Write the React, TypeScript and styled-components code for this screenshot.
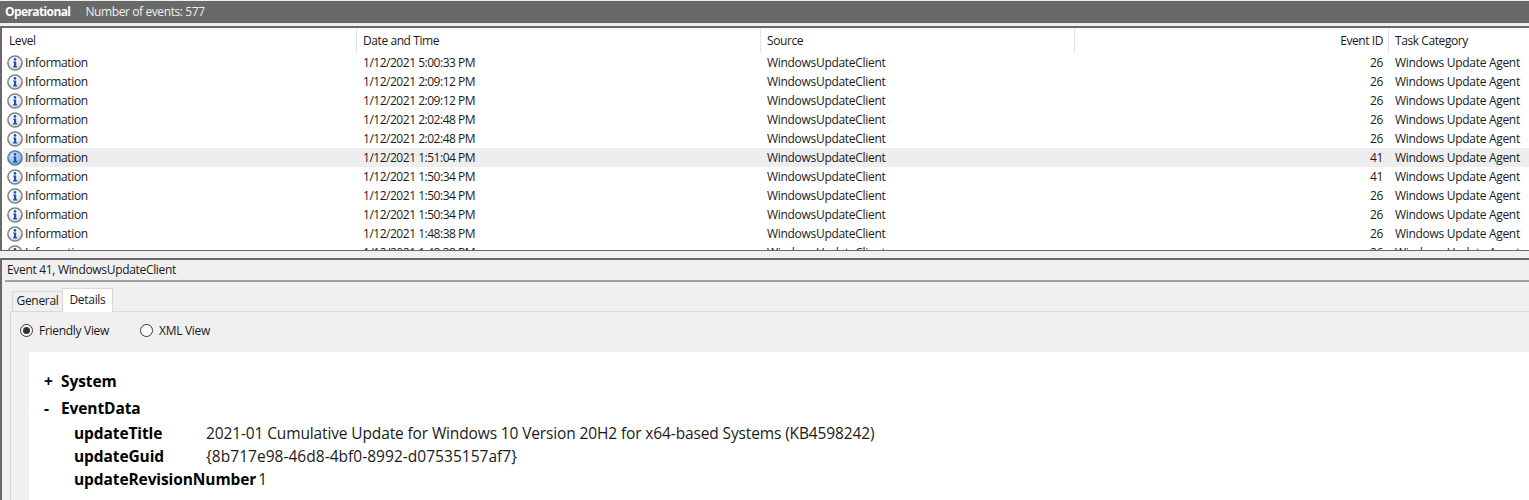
import React from "react";
import styled, { createGlobalStyle } from "styled-components";

const Global = createGlobalStyle`
  html, body { margin: 0; padding: 0; background: #f0f0f0; }
  body { font-family: "Open Sans", "Noto Sans", "Liberation Sans", sans-serif; font-size: 12px; color: #000; overflow: hidden; }
`;

const Page = styled.div`
  width: 1529px;
  height: 500px;
  overflow: hidden;
  display: flex;
  flex-direction: column;
  background: #f0f0f0;
`;

const TitleBar = styled.header`
  box-sizing: border-box;
  height: 22px;
  margin-top: 1px;
  padding: 0 0 2px 5px;
  background: #696969;
  color: #fff;
  display: flex;
  align-items: center;
  gap: 15px;
  flex: none;
`;
const TitleStrong = styled.span`
  font-weight: 700;
  font-size: 12px;
  letter-spacing: -0.6px;
`;
const TitleInfo = styled.span`
  font-size: 12px;
  color: #f0f0f0;
  letter-spacing: -0.4px;
`;

const ListPane = styled.section`
  margin-top: 3px;
  flex: none;
  overflow: hidden;
  background: #fff;
  border-top: 2px solid #696969;
  border-left: 2px solid #696969;
  border-bottom: 1px solid #696969;
  padding-left: 1px;
  box-sizing: border-box;
  height: 225px;
`;

const COLS = "354px 404px 314px 314px 1fr";

const HeaderRow = styled.div`
  display: grid;
  grid-template-columns: ${COLS};
  height: 25px;
`;
const HeadCell = styled.div<{ $right?: boolean; $sep?: boolean }>`
  display: flex;
  align-items: center;
  justify-content: ${(p) => (p.$right ? "flex-end" : "flex-start")};
  padding: 0 5px 0 6px;
  border-right: ${(p) => (p.$sep ? "1px solid #e5e5e5" : "none")};
  letter-spacing: -0.42px;
  color: #1a1a1a;
`;

const Row = styled.div<{ $selected?: boolean }>`
  display: grid;
  grid-template-columns: ${COLS};
  height: 19px;
  align-items: center;
  background: ${(p) => (p.$selected ? "linear-gradient(to right, #fff 20px, #eeeeee 20px)" : "#fff")};
`;
const LevelCell = styled.div`
  display: flex;
  align-items: center;
  gap: 2px;
  padding-left: 4px;
  letter-spacing: -0.33px;
  color: #1a1a1a;
`;
const Cell = styled.div<{ $right?: boolean; $tight?: boolean }>`
  padding: 0 ${(p) => (p.$right ? "6px" : "0")} 0 6px;
  text-align: ${(p) => (p.$right ? "right" : "left")};
  letter-spacing: ${(p) => (p.$tight ? "-0.48px" : "-0.3px")};
  color: #1a1a1a;
`;

const Splitter = styled.div`
  height: 7px;
  flex: none;
  background: #f0f0f0;
`;

const DetailPane = styled.section`
  flex: 1;
  display: flex;
  flex-direction: column;
  border-top: 2px solid #696969;
  border-left: 2px solid #696969;
  padding-left: 3px;
  min-height: 0;
`;
const DetailTitle = styled.div`
  box-sizing: border-box;
  height: 20px;
  flex: none;
  display: flex;
  align-items: center;
  padding: 0 0 2px 2px;
  letter-spacing: -0.32px;
  color: #1a1a1a;
`;
const TitleRule = styled.div`
  height: 2px;
  background: #a0a0a0;
  flex: none;
`;
const TabStrip = styled.div`
  display: flex;
  align-items: flex-end;
  height: 29px;
  padding-left: 7px;
  flex: none;
`;
const Tab = styled.div<{ $active?: boolean }>`
  box-sizing: border-box;
  height: ${(p) => (p.$active ? "24px" : "20px")};
  width: ${(p) => (p.$active ? "51px" : "50px")};
  padding-bottom: 2px;
  background: ${(p) => (p.$active ? "#fff" : "#f0f0f0")};
  border: 1px solid #d9d9d9;
  border-bottom: none;
  border-right: ${(p) => (p.$active ? "1px solid #d9d9d9" : "none")};
  display: flex;
  align-items: center;
  justify-content: center;
  letter-spacing: -0.3px;
  margin-bottom: ${(p) => (p.$active ? "-1px" : "0")};
  position: relative;
  z-index: 1;
  color: #1a1a1a;
`;
const TabBody = styled.div`
  flex: 1;
  margin-left: 5px;
  border-top: 1px solid #d9d9d9;
  border-left: 1px solid #d9d9d9;
  display: flex;
  flex-direction: column;
  min-height: 0;
`;
const RadioRow = styled.div`
  box-sizing: border-box;
  height: 40px;
  display: flex;
  align-items: center;
  padding: 0 0 4px 9px;
  gap: 31px;
  flex: none;
`;
const RadioLabel = styled.label`
  display: flex;
  align-items: center;
  gap: 6px;
  letter-spacing: -0.3px;
  color: #1a1a1a;
`;
const RadioDot = styled.span<{ $on?: boolean }>`
  box-sizing: border-box;
  width: 13px;
  height: 13px;
  border-radius: 50%;
  border: 1px solid #333;
  background: #fff;
  display: flex;
  align-items: center;
  justify-content: center;
  &::after {
    content: "";
    display: ${(p) => (p.$on ? "block" : "none")};
    width: 7px;
    height: 7px;
    border-radius: 50%;
    background: #333;
  }
`;
const XmlPanel = styled.div`
  flex: 1;
  margin-left: 18px;
  background: #fff;
  padding: 19px 0 0 15px;
  font-size: 15.5px;
`;
const TreeHead = styled.div<{ $gap?: number }>`
  display: flex;
  align-items: center;
  height: 20px;
  margin-bottom: ${(p) => p.$gap ?? 0}px;
  font-weight: 700;
  letter-spacing: -0.1px;
`;
const Toggle = styled.span`
  width: 17px;
`;
const DataRow = styled.div`
  display: flex;
  align-items: center;
  height: 23px;
  padding-left: 30px;
`;
const DataKey = styled.span<{ $wide?: boolean }>`
  font-weight: 700;
  letter-spacing: -0.1px;
  width: ${(p) => (p.$wide ? "auto" : "132px")};
  margin-right: ${(p) => (p.$wide ? "2px" : "0")};
`;
const DataValue = styled.span<{ $mono?: boolean }>`
  font-weight: 400;
  letter-spacing: ${(p) => (p.$mono ? "0.03px" : "-0.13px")};
  color: #1a1a1a;
`;

const InfoIcon: React.FC<{ id: string; $blue?: boolean }> = ({ id, $blue }) => (
  <svg width="16" height="16" viewBox="0 0 16 16" style={{ flex: "none" }}>
    <defs>
      <radialGradient id={id} cx="0.4" cy="0.3" r="0.8">
        <stop offset="0" stopColor={$blue ? "#d5e8f8" : "#ffffff"} />
        <stop offset="0.6" stopColor={$blue ? "#8fbce6" : "#e8ebf2"} />
        <stop offset="1" stopColor={$blue ? "#4a8ccb" : "#bcc4d6"} />
      </radialGradient>
    </defs>
    <circle cx="8" cy="8" r="7.1" fill={`url(#${id})`} stroke={$blue ? "#5a7ea3" : "#808088"} strokeWidth="1.5" />
    <circle cx="8" cy="4.4" r="1.35" fill="#2450a8" />
    <path d="M6.2 6.5H9.2V11.2H10.2V12.4H6V11.2H7V7.7H6.2Z" fill="#2450a8" />
  </svg>
);

const rows = [
  ["1/12/2021 5:00:33 PM", "26"],
  ["1/12/2021 2:09:12 PM", "26"],
  ["1/12/2021 2:09:12 PM", "26"],
  ["1/12/2021 2:02:48 PM", "26"],
  ["1/12/2021 2:02:48 PM", "26"],
  ["1/12/2021 1:51:04 PM", "41"],
  ["1/12/2021 1:50:34 PM", "41"],
  ["1/12/2021 1:50:34 PM", "26"],
  ["1/12/2021 1:50:34 PM", "26"],
  ["1/12/2021 1:48:38 PM", "26"],
  ["1/12/2021 1:48:38 PM", "26"],
];

export default function App() {
  return (
    <Page>
      <Global />
      <TitleBar>
        <TitleStrong>Operational</TitleStrong>
        <TitleInfo>Number of events: 577</TitleInfo>
      </TitleBar>
      <ListPane>
        <HeaderRow>
          <HeadCell $sep>Level</HeadCell>
          <HeadCell $sep>Date and Time</HeadCell>
          <HeadCell $sep>Source</HeadCell>
          <HeadCell $sep $right>Event ID</HeadCell>
          <HeadCell>Task Category</HeadCell>
        </HeaderRow>
        {rows.map(([date, id], i) => (
          <Row key={i} $selected={i === 5}>
            <LevelCell>
              <InfoIcon id={`info-${i}`} $blue={i === 5} />
              Information
            </LevelCell>
            <Cell $tight>{date}</Cell>
            <Cell>WindowsUpdateClient</Cell>
            <Cell $right>{id}</Cell>
            <Cell>Windows Update Agent</Cell>
          </Row>
        ))}
      </ListPane>
      <Splitter />
      <DetailPane>
        <DetailTitle>Event 41, WindowsUpdateClient</DetailTitle>
        <TitleRule />
        <TabStrip>
          <Tab>General</Tab>
          <Tab $active>Details</Tab>
        </TabStrip>
        <TabBody>
          <RadioRow>
            <RadioLabel><RadioDot $on />Friendly View</RadioLabel>
            <RadioLabel><RadioDot />XML View</RadioLabel>
          </RadioRow>
          <XmlPanel>
            <TreeHead $gap={7}><Toggle>+</Toggle>System</TreeHead>
            <TreeHead $gap={3}><Toggle>-</Toggle>EventData</TreeHead>
            <DataRow>
              <DataKey>updateTitle</DataKey>
              <DataValue>2021-01 Cumulative Update for Windows 10 Version 20H2 for x64-based Systems (KB4598242)</DataValue>
            </DataRow>
            <DataRow>
              <DataKey>updateGuid</DataKey>
              <DataValue $mono>{"{8b717e98-46d8-4bf0-8992-d07535157af7}"}</DataValue>
            </DataRow>
            <DataRow>
              <DataKey $wide>updateRevisionNumber</DataKey>
              <DataValue>1</DataValue>
            </DataRow>
          </XmlPanel>
        </TabBody>
      </DetailPane>
    </Page>
  );
}
